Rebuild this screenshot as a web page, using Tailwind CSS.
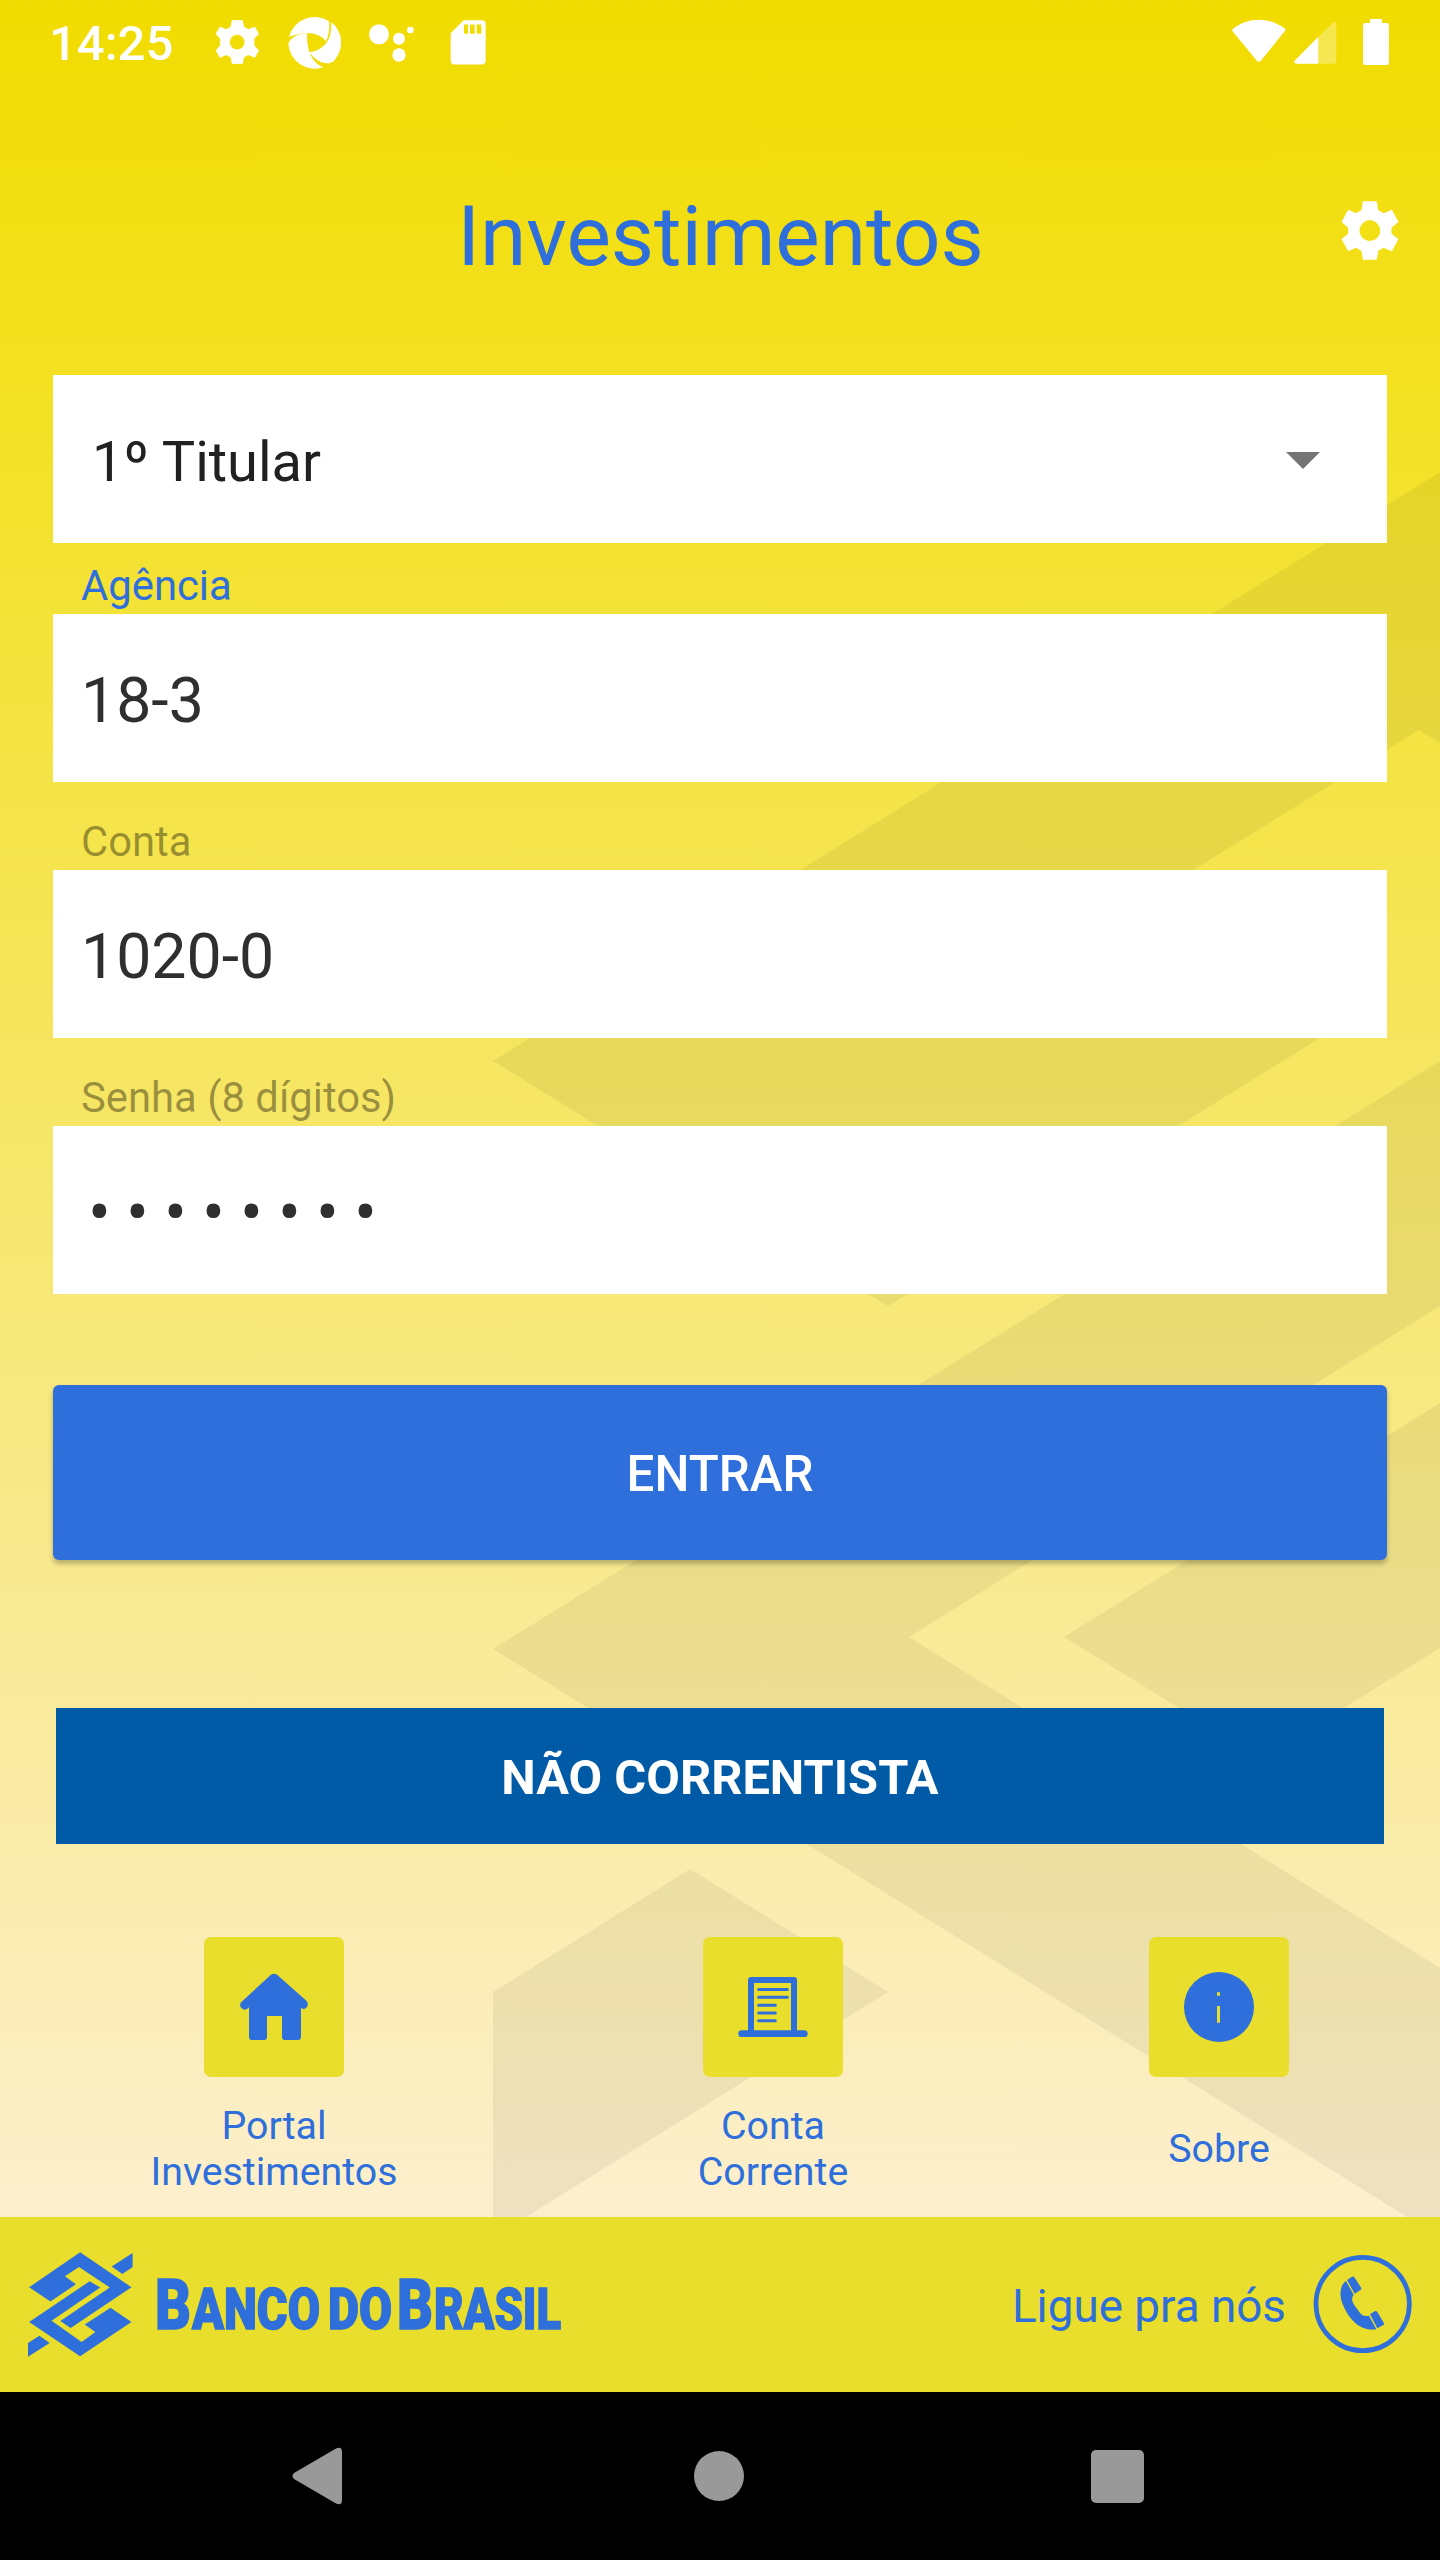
<!DOCTYPE html>
<html lang="pt-BR">
<head>
<meta charset="utf-8">
<title>Investimentos</title>
<script src="https://cdn.jsdelivr.net/npm/@tailwindcss/browser@4"></script>
</head>
<body class="w-[1440px] h-[2560px] overflow-hidden flex flex-col bg-black font-[Roboto,sans-serif] text-[#2e6fdb]">

<div class="relative h-[2217px] shrink-0 flex flex-col bg-[linear-gradient(to_bottom,#f1dc00_0%,#f3e123_18%,#f6e665_50%,#fcefcd_100%)]">
  <!-- oversized brand mark behind the form -->
  <svg class="absolute inset-0 w-[1440px] h-[2217px]" viewBox="0 0 1440 2217" fill="#000" fill-opacity=".055">
    <path d="M1440 472L493 1061L888 1306L1349 1020L1150 897L1419 730L1440 743Z"/>
    <path d="M1440 1061L493 1649L1407 2217H1440V1968L909 1637L1440 1306Z"/>
    <path d="M1440 1403L1064 1637L1262 1759L1440 1648Z"/>
    <path d="M493 1992L690 1869L888 1992L526 2217H493Z"/>
  </svg>

  <div class="relative h-[84px] flex items-start text-white">
    <span class="ml-[49px] mt-[15px] w-[125px] text-[49px] leading-[58px] font-medium whitespace-nowrap">14:25</span>
    <svg class="ml-[42px] mt-5 w-[43px] h-[44px]" viewBox="648 60 130 133" fill="currentColor" stroke="currentColor" stroke-width="2" stroke-linejoin="round"><path fill-rule="evenodd" d="M697 61H728L732 81L746 89L765 81L777 102L763 116V137L777 152L765 173L746 165L732 172L728 192H697L693 172L679 165L660 173L648 152L661 137V116L648 102L660 81L679 89L693 81ZM712 104a23 23 0 1 0 .1 0Z"/></svg>
    <svg class="ml-[29px] mt-4 w-[53px] h-[53px]" viewBox="863 48 160 160" fill="currentColor"><path d="M866 111A80 80 0 0 1 987 64C989 85 987 105 978 124C958 98 915 90 866 111ZM994 66A80 80 0 0 1 1006 178L1000 185L988 191C965 193 940 178 928 157C950 155 968 143 980 127C990 115 994 95 994 66ZM864 130C875 108 900 98 921 100C918 150 935 190 970 203A80 80 0 0 1 864 130Z"/></svg>
    <svg class="ml-7 mt-6 w-[45px] h-[38px]" viewBox="1107 73 135 114" fill="currentColor"><circle cx="1137" cy="104" r="30"/><circle cx="1197" cy="117" r="18"/><circle cx="1231" cy="91" r="10"/><circle cx="1197" cy="166" r="20"/></svg>
    <svg class="ml-9 mt-5 w-[36px] h-[45px]" viewBox="1351 60 108 134" fill="currentColor"><path fill-rule="evenodd" d="M1392 60H1447Q1458 60 1458 71V182Q1458 193 1447 193H1364Q1353 193 1353 182V99ZM1393 73V101H1405V73ZM1411 73V101H1425V73ZM1431 73V101H1445V73Z"/></svg>
    <svg class="ml-auto mt-[19px] w-[54px] h-[44px]" viewBox="95 57 162 132" fill="currentColor"><path d="M97 87C145 50 205 50 254 86Q257 90 253 94L181 183Q175 188 170 183L98 95Q94 91 97 87Z"/></svg>
    <svg class="ml-2 mt-[21px] w-[43px] h-[43px]" viewBox="281 64 129 129" fill="currentColor"><path fill-opacity=".3" d="M354 111L398 69Q408 62 408 72V186Q408 192 402 192H354Z"/><path d="M283 183L354 111V192H288Q279 190 283 183Z"/></svg>
    <svg class="ml-[26px] mr-[51px] mt-[19px] w-[26px] h-[46px]" viewBox="489 57 78 138" fill="currentColor"><path d="M510 57H546V69H561Q567 69 567 75V189Q567 195 561 195H495Q489 195 489 189V75Q489 69 495 69H510Z"/></svg>
  </div>

  <div class="relative h-[291px] pt-[97px] grid grid-cols-[1fr_auto_1fr] items-start">
    <span></span>
    <h1 class="mt-[5px] pl-[1px] text-[83.8px] leading-[100px]">Investimentos</h1>
    <svg class="justify-self-end mr-[41px] mt-[20px] w-[58px] h-[59px] text-white" viewBox="424 604 173 177" fill="currentColor"><path fill-rule="evenodd" d="M489 605H531L535 631L551 641L576 630L596 667L575 684V702L596 718L576 755L551 744L535 754L531 780H489L485 754L469 744L445 755L425 718L445 702V684L425 667L445 630L469 641L485 631ZM510 662a31 31 0 1 0 .1 0Z"/></svg>
  </div>

  <div class="relative px-[53px] flex flex-col">
    <div class="h-[168px] bg-white pl-[39px] pr-[67px] flex items-center justify-between">
      <span class="pt-[5px] text-[56px] leading-[66px] text-[#212121]">1º Titular</span>
      <svg class="mt-[3px] w-[34px] h-[17px]" viewBox="0 0 34 17" fill="#757575"><path d="M0 0H34L17 17Z"/></svg>
    </div>
    <div class="h-[71px] pl-[28px] pb-[3px] flex items-end text-[41.8px] leading-[50px]">Agência</div>
    <div class="h-[168px] bg-white pl-[28px] pt-[5px] flex items-center text-[62.6px] leading-[74px] text-[#2f2f2f]">18-3</div>
    <div class="h-[88px] pl-[28px] pb-[3px] flex items-end text-[41.8px] leading-[50px] text-black/38">Conta</div>
    <div class="h-[168px] bg-white pl-[28px] pt-[5px] flex items-center text-[62.6px] leading-[74px] text-[#2f2f2f]">1020-0</div>
    <div class="h-[88px] pl-[28px] pb-[3px] flex items-end text-[41.8px] leading-[50px] text-black/38">Senha (8 dígitos)</div>
    <div class="h-[168px] bg-white pl-[35px] pt-[5px] flex items-center text-[68px] leading-[80px] tracking-[15.05px] text-[#2f2f2f]">••••••••</div>
    <div class="mt-[91px] h-[175px] rounded-[6px] bg-[#2e6fdb] shadow-[0_4px_5px_rgba(0,0,0,0.25)] pt-[5px] flex items-center justify-center text-[49.3px] font-medium text-white">ENTRAR</div>
    <div class="mt-[148px] mx-[3px] h-[136px] bg-[#005aa5] pt-1 flex items-center justify-center text-[48.8px] font-bold text-white">NÃO CORRENTISTA</div>
  </div>

  <div class="relative mt-[93px] grid grid-cols-[548px_450px_442px] justify-items-center text-center text-[39.3px] leading-[46px]">
    <div class="flex flex-col items-center">
      <svg class="w-[140px] h-[140px] rounded-[7px] bg-[#e9de2b]" viewBox="72 51 420 420" fill="currentColor"><path d="M272 165Q282 158 292 165L380 243Q388 256 378 264Q370 270 363 263V350Q363 360 353 360H316Q306 360 306 350V288H261V350Q261 360 251 360H217Q207 360 207 350V262Q200 270 192 269Q176 262 182 248Z"/></svg>
      <span class="mt-[26px] h-[92px] flex items-center">Portal<br>Investimentos</span>
    </div>
    <div class="flex flex-col items-center">
      <svg class="w-[140px] h-[140px] rounded-[7px] bg-[#e9de2b]" viewBox="69 51 420 420" fill="none" stroke="currentColor" stroke-linecap="round"><path stroke-width="18" stroke-linejoin="round" d="M213 338V180H342V338"/><path stroke-width="20" d="M185 341H373"/><path stroke-width="9" d="M236 208.500H322M236 231.500H322M236 255.500H286M236 279H286M236 302.500H286"/></svg>
      <span class="mt-[26px] h-[92px] flex items-center">Conta<br>Corrente</span>
    </div>
    <div class="flex flex-col items-center">
      <svg class="w-[140px] h-[140px] rounded-[7px] bg-[#e9de2b]" viewBox="87 51 420 420"><circle cx="297" cy="261" r="105" fill="currentColor"/><path fill="#e9de2b" d="M291 217h9v10h-9zM291 258h9v50h-9z"/></svg>
      <span class="mt-[26px] h-[92px] flex items-center">Sobre</span>
    </div>
  </div>
</div>

<div class="h-[175px] shrink-0 bg-[#e9de2b] flex items-center pl-[28px] pr-[27px]">
  <svg class="w-[105px] h-[105px]" viewBox="73 155 276 316" preserveAspectRatio="none" fill="currentColor"><path d="M210 156L345 261L185 384L158 363L288 262L207 200L170 228L199 252L132 304L76 261ZM210 469L76 366L235 243L263 262L135 362L214 426L250 396L222 373L290 323L345 366ZM293 199L348 158V200L321 221ZM73 429L103 407L130 429L73 470Z"/></svg>
  <svg class="ml-[17px] w-[420px] h-[110px] overflow-visible" viewBox="150 2250 420 110" fill="currentColor" stroke="currentColor" stroke-width="1.500" font-family="Roboto" font-weight="900">
    <text y="2328.500"><tspan x="155" font-size="70" textLength="36" lengthAdjust="spacingAndGlyphs">B</tspan><tspan x="192" font-size="57" textLength="128" lengthAdjust="spacingAndGlyphs">ANCO</tspan><tspan x="328" font-size="57" textLength="64" lengthAdjust="spacingAndGlyphs">DO</tspan><tspan x="397" font-size="70" textLength="36" lengthAdjust="spacingAndGlyphs">B</tspan><tspan x="434" font-size="57" textLength="127" lengthAdjust="spacingAndGlyphs">RASIL</tspan></text>
  </svg>
  <span class="ml-auto pt-1 text-[45.8px] leading-[54px]">Ligue pra nós</span>
  <svg class="ml-[27px] mb-[2px] w-[100px] h-[100px]" viewBox="1000 162 300 300" fill="currentColor"><circle cx="1149" cy="312" r="140" fill="none" stroke="currentColor" stroke-width="14"/><path d="M1099 243C1080 255 1078 290 1090 315C1105 350 1135 395 1190 388L1168 347C1150 350 1145 345 1135 330C1120 310 1112 300 1122 284ZM1102 240L1117 230Q1121 228 1124 232L1145 264Q1146 268 1142 270L1125 281ZM1171 343L1185 334Q1190 332 1193 336L1213 370Q1214 374 1210 376L1193 385Z"/></svg>
</div>

<div class="h-[168px] shrink-0 bg-black flex items-center text-[#999]">
  <svg class="ml-[292px] w-[50px] h-[58px]" viewBox="0 0 50 58" fill="currentColor"><path d="M2 26L44 1.500Q50-1 50 5V53Q50 59 44 56.500L2 32Q-1 29 2 26Z"/></svg>
  <div class="ml-[352px] w-[50px] h-[50px] rounded-full bg-[#999]"></div>
  <div class="ml-[347px] w-[53px] h-[53px] rounded-[5px] bg-[#999]"></div>
</div>
</body>
</html>
